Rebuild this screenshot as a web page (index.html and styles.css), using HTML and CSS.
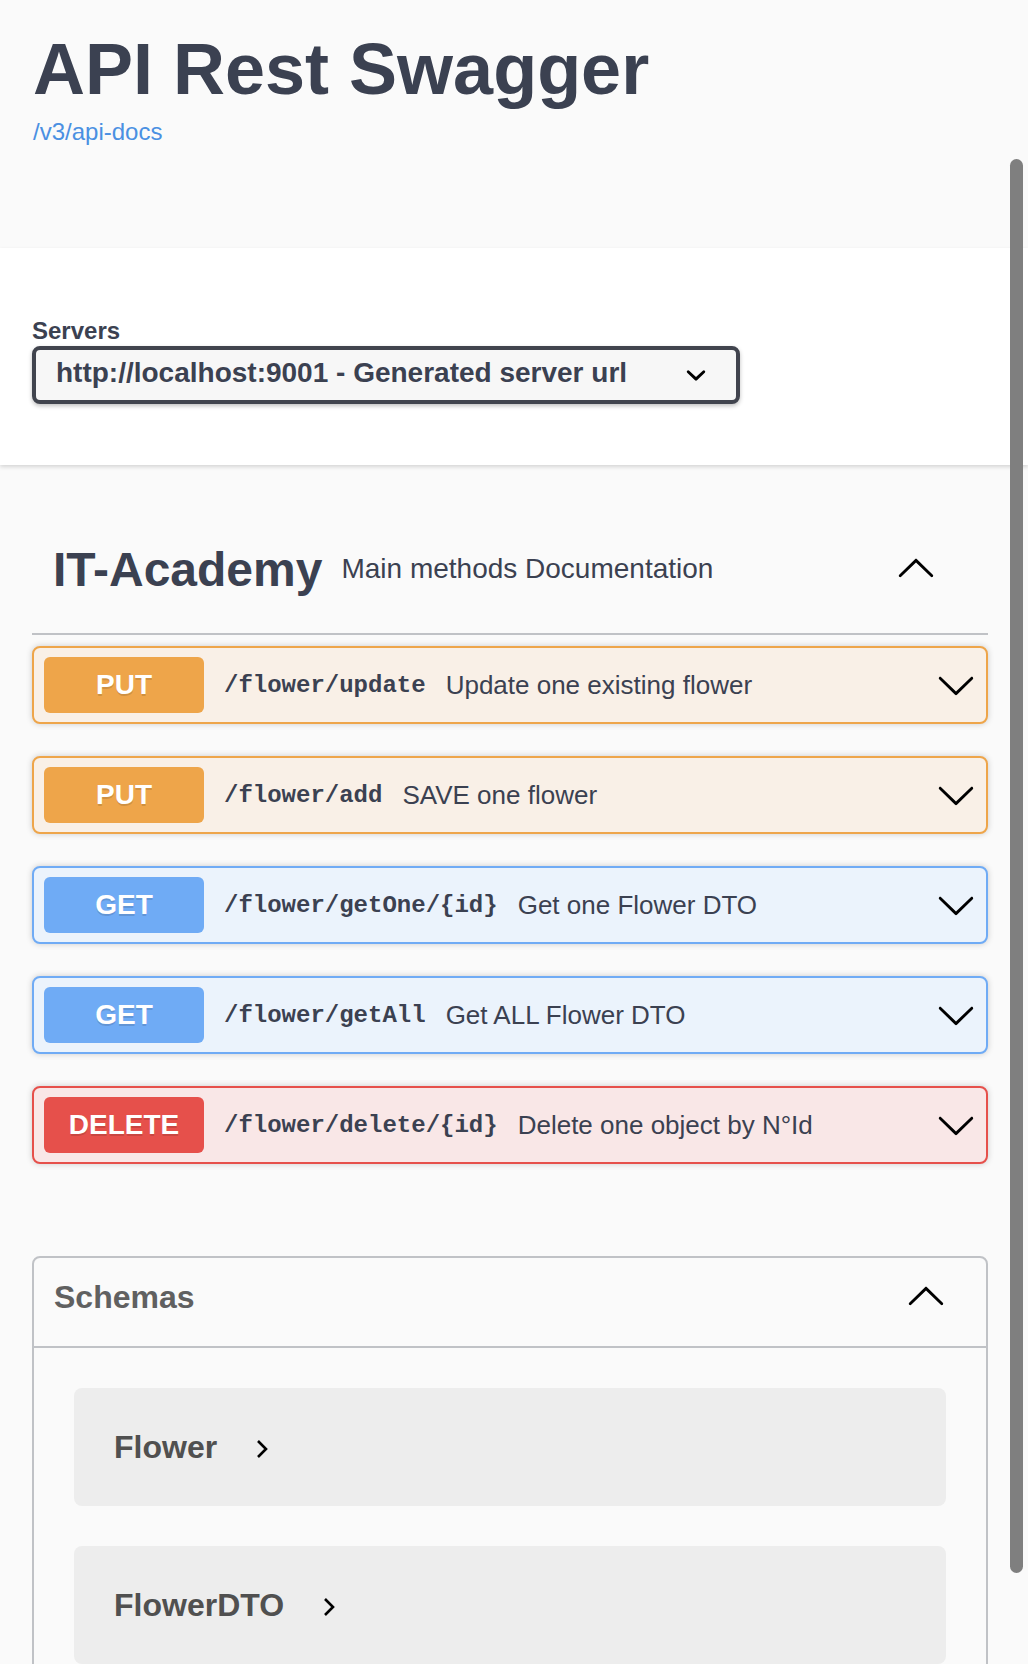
FILE: index.html
```html
<!DOCTYPE html>
<html lang="en">
<head>
<meta charset="utf-8">
<title>API Rest Swagger</title>
<link rel="stylesheet" href="styles.css">
</head>
<body>
  <section class="info">
    <h1 class="title">API Rest Swagger</h1>
    <a class="spec-link" href="#">/v3/api-docs</a>
  </section>

  <section class="scheme-container">
    <label class="servers-title">Servers</label>
    <div class="select">
      <span class="select-value">http://localhost:9001 - Generated server url</span>
      <svg class="select-arrow" viewBox="0 0 20 20" width="40" height="40"><path d="M13.418 7.859a.695.695 0 01.978 0 .68.68 0 010 .969l-3.908 3.83a.697.697 0 01-.979 0l-3.908-3.83a.68.68 0 010-.969.695.695 0 01.978 0L10 11l3.418-3.141z"/></svg>
    </div>
  </section>

  <main class="wrapper">
    <h3 class="opblock-tag">
      <span class="tag-name">IT-Academy</span>
      <small class="tag-desc">Main methods Documentation</small>
      <svg class="arrow" viewBox="0 0 20 20" width="40" height="40"><path d="M17.418 13.891c.272.268.709.268.979 0s.271-.701 0-.969l-7.908-7.830c-.27-.268-.707-.268-.979 0l-7.908 7.830c-.27.268-.27.701 0 .969.271.268.709.268.979 0L10 6.75l7.418 7.141z"/></svg>
    </h3>

    <div class="opblock put">
      <span class="method">PUT</span>
      <span class="path">/flower/update</span>
      <span class="desc">Update one existing flower</span>
      <svg class="arrow" viewBox="0 0 20 20" width="40" height="40"><path d="M17.418 6.109c.272-.268.709-.268.979 0s.271.701 0 .969l-7.908 7.83c-.27.268-.707.268-.979 0l-7.908-7.83c-.27-.268-.27-.701 0-.969.271-.268.709-.268.979 0L10 13.25l7.418-7.141z"/></svg>
    </div>
    <div class="opblock put">
      <span class="method">PUT</span>
      <span class="path">/flower/add</span>
      <span class="desc">SAVE one flower</span>
      <svg class="arrow" viewBox="0 0 20 20" width="40" height="40"><path d="M17.418 6.109c.272-.268.709-.268.979 0s.271.701 0 .969l-7.908 7.83c-.27.268-.707.268-.979 0l-7.908-7.83c-.27-.268-.27-.701 0-.969.271-.268.709-.268.979 0L10 13.25l7.418-7.141z"/></svg>
    </div>
    <div class="opblock get">
      <span class="method">GET</span>
      <span class="path">/flower/getOne/{id}</span>
      <span class="desc">Get one Flower DTO</span>
      <svg class="arrow" viewBox="0 0 20 20" width="40" height="40"><path d="M17.418 6.109c.272-.268.709-.268.979 0s.271.701 0 .969l-7.908 7.83c-.27.268-.707.268-.979 0l-7.908-7.83c-.27-.268-.27-.701 0-.969.271-.268.709-.268.979 0L10 13.25l7.418-7.141z"/></svg>
    </div>
    <div class="opblock get">
      <span class="method">GET</span>
      <span class="path">/flower/getAll</span>
      <span class="desc">Get ALL Flower DTO</span>
      <svg class="arrow" viewBox="0 0 20 20" width="40" height="40"><path d="M17.418 6.109c.272-.268.709-.268.979 0s.271.701 0 .969l-7.908 7.83c-.27.268-.707.268-.979 0l-7.908-7.83c-.27-.268-.27-.701 0-.969.271-.268.709-.268.979 0L10 13.25l7.418-7.141z"/></svg>
    </div>
    <div class="opblock delete">
      <span class="method">DELETE</span>
      <span class="path">/flower/delete/{id}</span>
      <span class="desc">Delete one object by N°Id</span>
      <svg class="arrow" viewBox="0 0 20 20" width="40" height="40"><path d="M17.418 6.109c.272-.268.709-.268.979 0s.271.701 0 .969l-7.908 7.83c-.27.268-.707.268-.979 0l-7.908-7.83c-.27-.268-.27-.701 0-.969.271-.268.709-.268.979 0L10 13.25l7.418-7.141z"/></svg>
    </div>

    <section class="models">
      <h4 class="models-header">
        <span class="models-title">Schemas</span>
        <svg class="arrow" viewBox="0 0 20 20" width="40" height="40"><path d="M17.418 13.891c.272.268.709.268.979 0s.271-.701 0-.969l-7.908-7.830c-.27-.268-.707-.268-.979 0l-7.908 7.830c-.27.268-.27.701 0 .969.271.268.709.268.979 0L10 6.75l7.418 7.141z"/></svg>
      </h4>
      <div class="model-container first">
        <span class="model-title">Flower</span>
        <svg class="model-toggle" viewBox="0 0 14 20" width="14" height="20"><polyline points="3,2 11,10 3,18" fill="none" stroke="#000" stroke-width="2.6"/></svg>
      </div>
      <div class="model-container">
        <span class="model-title">FlowerDTO</span>
        <svg class="model-toggle" viewBox="0 0 14 20" width="14" height="20"><polyline points="3,2 11,10 3,18" fill="none" stroke="#000" stroke-width="2.6"/></svg>
      </div>
    </section>
  </main>

  <div class="scrollbar"></div>
</body>
</html>
```

FILE: styles.css
```css
* {
  box-sizing: border-box;
}

html,
body {
  margin: 0;
  padding: 0;
  overflow: hidden;
}

body {
  position: relative;
  width: 1028px;
  height: 1664px;
  background: #fafafa;
  color: #3b4151;
  font-family: "Liberation Sans", Arial, Helvetica, sans-serif;
}

/* ---------- info header ---------- */
.info {
  height: 248px;
  padding: 29px 40px 0 33px;
}

.title {
  margin: 0;
  font-size: 72px;
  line-height: 80px;
  font-weight: 700;
  color: #3b4151;
}

.spec-link {
  display: inline-block;
  margin-top: 9px;
  font-size: 24px;
  line-height: 28px;
  color: #4a90e2;
  text-decoration: none;
}

/* ---------- servers ---------- */
.scheme-container {
  background: #fff;
  box-shadow: 0 2px 4px 0 rgba(0, 0, 0, 0.15);
  padding: 69px 40px 61px 32px;
  position: relative;
}

.servers-title {
  display: block;
  font-size: 24px;
  line-height: 28px;
  font-weight: 700;
  color: #3b4151;
  margin-bottom: 1px;
}

.select {
  display: flex;
  align-items: center;
  justify-content: space-between;
  width: 708px;
  height: 58px;
  padding: 0 20px 4px 20px;
  border: 4px solid #41444e;
  border-radius: 8px;
  background: #f7f7f7;
  box-shadow: 0 2px 4px 0 rgba(0, 0, 0, 0.25);
  font-size: 28px;
  font-weight: 700;
  color: #3b4151;
}

.select-arrow {
  flex: none;
  margin-top: 4px;
}

/* ---------- operations ---------- */
.wrapper {
  padding: 40px 40px 0 32px;
}

.opblock-tag {
  display: flex;
  align-items: center;
  height: 130px;
  margin: 0 0 11px;
  padding: 0 52px 0 21px;
  border-bottom: 2px solid rgba(59, 65, 81, 0.3);
  color: #3b4151;
}

.tag-name {
  font-size: 48px;
  font-weight: 700;
}

.tag-desc {
  flex: 1;
  padding: 0 18px 0 19px;
  font-size: 28px;
  font-weight: 400;
}

.arrow {
  flex: none;
  display: block;
}

.opblock {
  display: flex;
  align-items: center;
  height: 78px;
  margin-bottom: 32px;
  padding: 0 10px;
  border: 2px solid;
  border-radius: 8px;
  box-shadow: 0 0 6px rgba(0, 0, 0, 0.19);
}

.method {
  flex: none;
  display: flex;
  align-items: center;
  justify-content: center;
  width: 160px;
  height: 56px;
  border-radius: 6px;
  color: #fff;
  font-size: 28px;
  font-weight: 700;
  text-shadow: 0 2px 0 rgba(0, 0, 0, 0.12);
}

.path {
  padding: 0 20px;
  font-family: "Liberation Mono", "Courier New", monospace;
  font-size: 24px;
  font-weight: 700;
  color: #3b4151;
}

.desc {
  flex: 1;
  font-size: 26px;
  color: #3b4151;
}

.put {
  background: #f9f0e7;
  border-color: #eea54a;
}

.put .method {
  background: #eea54a;
}

.get {
  background: #ebf3fc;
  border-color: #6fabf5;
}

.get .method {
  background: #6fabf5;
}

.delete {
  background: #f9e7e7;
  border-color: #e6504b;
}

.delete .method {
  background: #e6504b;
}

/* ---------- schemas ---------- */
.models {
  margin-top: 92px;
  border: 2px solid rgba(59, 65, 81, 0.3);
  border-radius: 8px;
}

.models-header {
  display: flex;
  align-items: center;
  margin: 0;
  padding: 19px 40px 29px 20px;
  border-bottom: 2px solid rgba(59, 65, 81, 0.3);
  font-size: 32px;
  font-weight: 700;
  color: #606060;
}

.models-title {
  flex: 1;
}

.model-container {
  display: flex;
  align-items: center;
  height: 118px;
  margin: 0 40px 40px;
  padding-left: 40px;
  border-radius: 8px;
  background: #ededed;
}

.model-container.first {
  margin-top: 40px;
}

.model-title {
  font-size: 32px;
  font-weight: 700;
  color: #505050;
}

.model-toggle {
  margin-left: 38px;
  margin-top: 4px;
}

/* overlay scrollbar thumb */
.scrollbar {
  position: absolute;
  top: 159px;
  right: 5px;
  width: 13px;
  height: 1414px;
  border-radius: 7px;
  background: #7f7f7f;
}
```
